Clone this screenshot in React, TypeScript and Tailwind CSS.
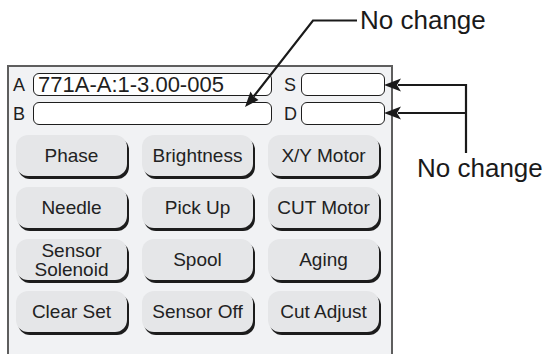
import React from "react";

const buttons: string[][] = [
  ["Phase"],
  ["Brightness"],
  ["X/Y Motor"],
  ["Needle"],
  ["Pick Up"],
  ["CUT Motor"],
  ["Sensor", "Solenoid"],
  ["Spool"],
  ["Aging"],
  ["Clear Set"],
  ["Sensor Off"],
  ["Cut Adjust"],
];

function Field({ w, text }: { w: string; text?: string }) {
  return (
    <div
      className={`${w} h-[23px] rounded-[6px] border-[1.5px] border-[#1e1e1e] bg-white pl-[4px] text-[22px] leading-[21px] text-[#1e1e1e] whitespace-nowrap`}
    >
      {text}
    </div>
  );
}

function Callouts() {
  return (
    <svg
      className="absolute left-0 top-0 pointer-events-none"
      width={548}
      height={354}
      viewBox="0 0 548 354"
    >
      <g stroke="#1a1a1a" strokeWidth={2.2} fill="none" strokeLinejoin="miter">
        <polyline points="357,20.5 313,20.5 253.6,96.5" />
        <polyline points="398,85 466,85 466,153" />
        <polyline points="398,113 466,113" />
      </g>
      <g fill="#1a1a1a">
        <polygon points="245,107 258.5,100 253.6,96.5 250.5,91.5" />
        <polygon points="384,85 401,78.5 397,85 401,91.5" />
        <polygon points="384,113 401,106.5 397,113 401,119.5" />
      </g>
    </svg>
  );
}

export default function App() {
  return (
    <div className="relative w-[548px] h-[354px] overflow-hidden bg-white font-['Liberation_Sans',Arial,sans-serif] text-[#1e1e1e]">
      <div className="pt-[65px] pl-[7px]">
        <div className="w-[386px] h-[300px] border-2 border-b-0 border-[#5e5e5e] bg-[#f1f2f4] pt-[6px]">
          <div className="flex flex-col gap-[6px] pl-[4px]">
            <div className="flex items-center">
              <span className="w-[20px] text-[18px] leading-none">A</span>
              <Field w="w-[239px]" text="771A-A:1-3.00-005" />
              <span className="w-[29px] pl-[12px] text-[18px] leading-none">S</span>
              <Field w="w-[84px]" />
            </div>
            <div className="flex items-center">
              <span className="w-[20px] text-[18px] leading-none">B</span>
              <Field w="w-[239px]" />
              <span className="w-[29px] pl-[12px] text-[18px] leading-none">D</span>
              <Field w="w-[84px]" />
            </div>
          </div>
          <div className="mt-[10px] ml-[7px] grid grid-cols-[111px_111px_111px] gap-x-[15px] gap-y-[11px]">
            {buttons.map((lines, i) => (
              <div
                key={i}
                className="h-[41px] rounded-[12px] bg-[#e5e6e8] shadow-[2px_3px_0_#1c1c1c] flex flex-col items-center justify-center text-[19px] leading-[19px] text-[#222]"
              >
                {lines.map((l) => (
                  <span key={l}>{l}</span>
                ))}
              </div>
            ))}
          </div>
        </div>
      </div>
      <Callouts />
      <div className="absolute left-[360px] top-[7px] text-[26px] leading-[26px] whitespace-nowrap text-[#1a1a1a]">
        No change
      </div>
      <div className="absolute left-[417px] top-[155px] text-[26px] leading-[26px] whitespace-nowrap text-[#1a1a1a]">
        No change
      </div>
    </div>
  );
}
